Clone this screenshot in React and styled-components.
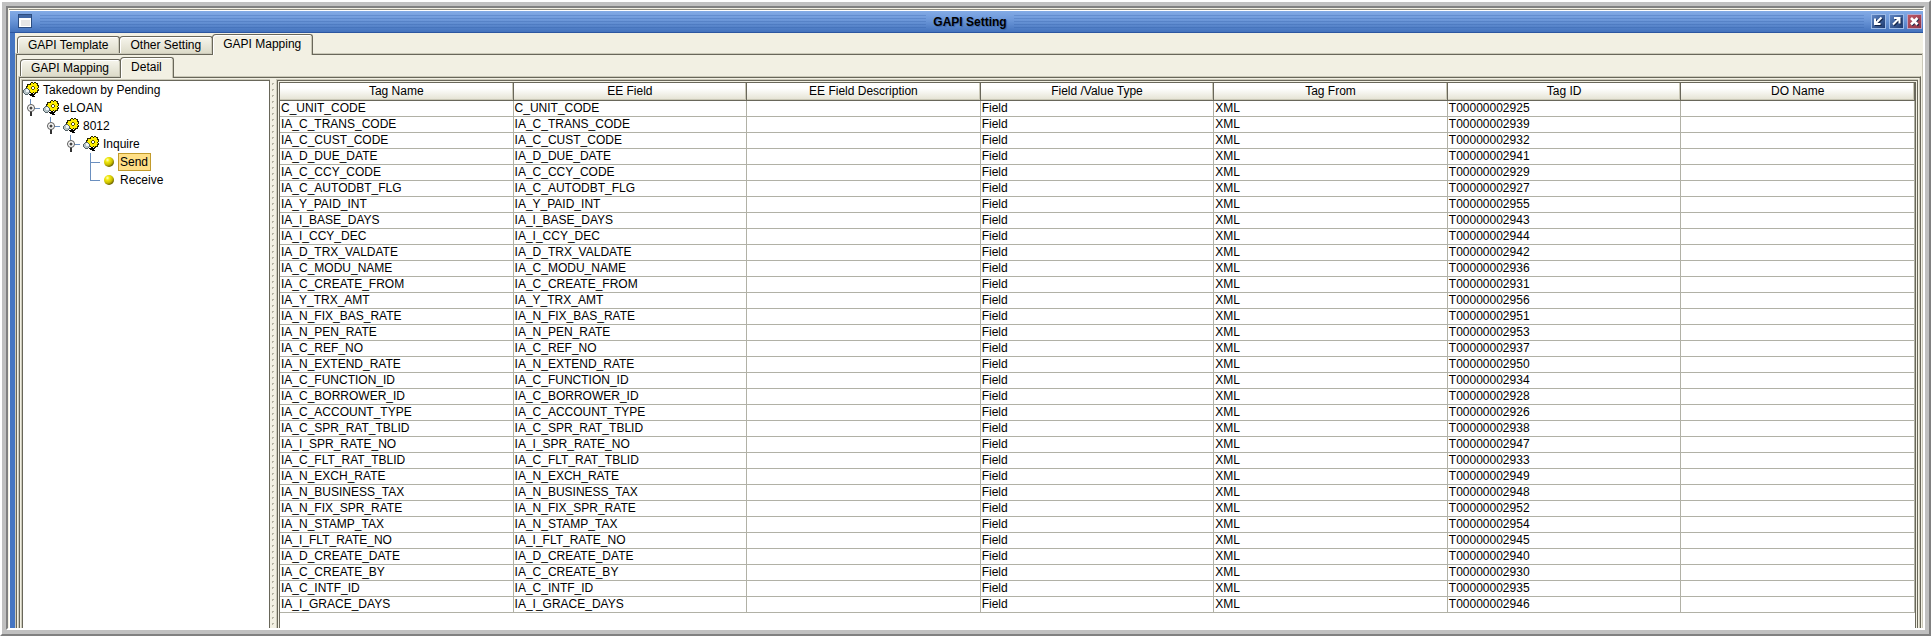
import React, { useState } from "react";
import styled, { createGlobalStyle, css } from "styled-components";

const c = {
  bg: "#f2f0e3",
  dark: "#69675a",
  mid: "#cbc9b9",
  grid: "#b1b1a6",
  blue: "#4676c2",
  branch: "#6a8fbf",
};

const GlobalStyle = createGlobalStyle`
  *, *::before, *::after { box-sizing: border-box; }
  html, body { margin: 0; padding: 0; }
  body, button, table {
    font-family: "Liberation Sans", Arial, sans-serif;
    font-size: 12px;
    color: #000;
  }
  button { margin: 0; padding: 0; border: 0; background: none; }
`;

const OuterFrame = styled.div`
  display: flex;
  min-height: 100vh;
  border: 2px solid;
  border-color: #fff #808080 #808080 #fff;
`;

const MiddleFrame = styled.div`
  display: flex;
  flex: 1;
  min-width: 0;
  border: 4px solid #c0c0c0;
`;

const InnerFrame = styled.div`
  display: flex;
  flex: 1;
  min-width: 0;
  padding: 1px 0 0 1px;
  border: 2px solid;
  border-color: #808080 #fff #fff #808080;
  background: ${c.bg};
`;

const Window = styled.main`
  display: flex;
  flex: 1;
  flex-direction: column;
  min-width: 0;
  padding: 1px 0 0 1px;
  border-top: 1px solid #8e8c80;
  background: #fff;
`;

const TitleBar = styled.header`
  display: flex;
  align-items: center;
  height: 22px;
  padding: 0 1px 0 8px;
  border-bottom: 1px solid #2c56a0;
  background: linear-gradient(#83abe6, #6e99da 40%, #4473bd);
`;

const TitleSide = styled.div`
  display: flex;
  flex: 1 1 0;
  align-items: center;
  gap: 7px;
`;

const TitleGrip = styled.span`
  flex: 1;
  height: 14px;
  background: repeating-linear-gradient(
    rgba(30, 75, 150, 0.22) 0 1px,
    transparent 1px 3px
  );
`;

const Title = styled.h1`
  margin: 0;
  padding: 0 7px;
  font-size: 12px;
  line-height: 20px;
  text-shadow: 1px 1px 1px #3c66a8;
`;

const WindowIcon = styled.svg`
  width: 15px;
  height: 15px;
`;

const WindowButtons = styled.div`
  display: flex;
  gap: 3px;
`;

const WindowButton = styled.button`
  width: 15px;
  height: 15px;
  border: 1px solid ${(p) => (p.$danger ? "#b3a6cc" : "#9dbbe8")};
  background: ${(p) =>
    p.$danger
      ? "linear-gradient(135deg, #c05a66, #8d3447)"
      : "linear-gradient(135deg, #5f86c4, #1d3a70)"};
  svg { display: block; }
`;

const WindowBody = styled.div`
  display: flex;
  flex: 1;
  flex-direction: column;
  min-width: 0;
  border-left: 5px solid ${c.blue};
  background: ${c.bg};
`;

const TabStrip = styled.div`
  display: flex;
  align-items: flex-end;
  height: ${(p) => p.$height}px;
  padding-left: 2px;
`;

const Tab = styled.button`
  height: 17px;
  padding: 1px 11px 0 10px;
  border: solid ${c.dark};
  border-width: 1px 1px 0;
  border-radius: 4px 3px 0 0;
  box-shadow: inset 1px 1px #fff, inset -1px 0 #c9c7b6;
  background: linear-gradient(#f6f5ec, #dddbc9);
  line-height: 15px;
  white-space: nowrap;
  & + & { margin-left: -1px; }
  ${(p) =>
    p.$active &&
    css`
      position: relative;
      z-index: 1;
      height: 21px;
      margin-bottom: -2px;
      padding-bottom: 2px;
      background: ${c.bg};
    `}
`;

const OuterPanel = styled.section`
  display: flex;
  flex: 1;
  flex-direction: column;
  min-width: 0;
  padding: 1px 1px 0 2px;
  border: solid ${c.mid};
  border-width: 1px 1px 0;
  box-shadow: inset 1px 1px ${c.dark};
`;

const InnerPanel = styled.section`
  display: flex;
  flex: 1;
  min-width: 0;
  padding: 2px 2px 0;
  border: solid ${c.mid};
  border-width: 1px 1px 0;
  border-right-color: ${c.dark};
  box-shadow: inset 1px 1px ${c.dark}, inset -1px 0 ${c.mid};
`;

const TreePane = styled.nav`
  flex: 0 0 249px;
  border: solid ${c.mid};
  border-width: 1px 0 0 1px;
`;

const Tree = styled.ul`
  height: 100%;
  margin: 0;
  padding: 0;
  border: solid ${c.dark};
  border-width: 1px 1px 0;
  background: #fff;
  list-style: none;
`;

const TreeRow = styled.li`
  display: flex;
  align-items: center;
  height: 18px;
  padding-left: ${(p) => p.$indent}px;
`;

const TreeToggle = styled.button`
  width: 20px;
  height: 18px;
  svg { display: block; }
`;

const TreeBranch = styled.svg`
  width: 20px;
  height: 18px;
`;

const TreeLabel = styled.button`
  height: 18px;
  margin-left: 2px;
  padding: 0 1px;
  border: 1px solid ${(p) => (p.$selected ? "#c29b2c" : "transparent")};
  background: ${(p) => (p.$selected ? "#ffdf86" : "none")};
  line-height: 16px;
  white-space: nowrap;
  ${(p) => p.$selected && "padding-right: 2px;"}
`;

const Splitter = styled.div`
  flex: 0 0 6px;
  padding: 4px 2px 0;
  &::before {
    content: "";
    display: block;
    height: 100%;
    background:
      repeating-linear-gradient(#b5b3a3 0 1px, transparent 1px 6px) 0 0 / 2px 100% no-repeat,
      repeating-linear-gradient(#b5b3a3 0 2px, transparent 2px 6px) 0 0 / 1px 100% no-repeat;
  }
`;

const TablePane = styled.div`
  flex: 1;
  min-width: 0;
  border: solid ${c.mid};
  border-width: 1px 0 0 1px;
`;

const TableBorder = styled.div`
  height: 100%;
  padding: 1px 1px 0;
  border: solid ${c.dark};
  border-width: 1px 1px 0;
`;

const TableView = styled.div`
  height: 100%;
  border: solid ${c.dark};
  border-width: 1px 1px 0;
  background: #fff;
`;

const Table = styled.table`
  width: 100%;
  table-layout: fixed;
  border-collapse: separate;
  border-spacing: 0;
`;

const HeadCell = styled.th`
  height: 18px;
  padding: 0;
  border: solid ${c.dark};
  border-width: 0 1px 1px 0;
  box-shadow: inset -1px -1px #c9c7b6;
  background: linear-gradient(#fff 30%, #e4e2d2);
  font-weight: normal;
  line-height: 17px;
`;

const Cell = styled.td`
  height: 16px;
  padding: 0 0 0 1px;
  border: solid ${c.grid};
  border-width: 0 1px 1px 0;
  line-height: 15px;
  white-space: nowrap;
`;

const GearIcon = () => (
  <svg width="16" height="16" viewBox="0 0 16 16" shapeRendering="crispEdges" aria-hidden="true">
    <path
      d="M8 0h2v1h1V0h2v1h2v2h1v3h-1v1h1v2h-1v2h-2v1h-2v-1h-1v1H8v-1H5V9H4V7H3V4h1V2h3V1h1z"
      fill="#2a2700"
    />
    <path
      d="M8 1h2v1h1V1h2v1h1v2h1v2h-1v1h1v1h-1v2h-2v1h-1v-1h-1v1H8v-1H6V8H5V6H4V5h1V3h3z"
      fill="#ffee00"
    />
    <path d="M9 4h2v1h1v2h-1v1H9V7H8V5h1z" fill="#5c5400" />
    <path d="M9 5h2v2H9z" fill="#fff" />
    <path d="M6 12h2v-1h2v1h2v1h-1v1h1v1H9v-1H7v-1H6z" fill="#000" />
    <path d="M2 6h3v1h1v1h1v3H6v1H5v1H2v-1H1v-1H0V8h1V7h1z" fill="#55646a" />
    <path d="M2 7h3v1h1v3H5v1H2v-1H1V8h1z" fill="#b4c2c6" />
    <path d="M3 7h2v1h1v2H3z" fill="#f0f5f6" />
  </svg>
);

const BallIcon = () => (
  <svg width="13" height="18" viewBox="0 0 13 18" aria-hidden="true">
    <defs>
      <radialGradient id="ball" cx="35%" cy="30%" r="70%">
        <stop offset="0" stopColor="#ffffc8" />
        <stop offset="0.3" stopColor="#f2ea10" />
        <stop offset="0.7" stopColor="#c9bd00" />
        <stop offset="1" stopColor="#6c6500" />
      </radialGradient>
    </defs>
    <circle cx="6" cy="9" r="5" fill="url(#ball)" />
  </svg>
);

const HandleIcon = () => (
  <svg width="20" height="18" viewBox="0 0 20 18" aria-hidden="true">
    <path d="M7 0h1v5H7zM12 9h5v1h-5z" fill={c.branch} />
    <path d="M7 12h2v5H7z" fill="#333" />
    <circle cx="8" cy="9" r="3.5" fill="#fff" stroke="#555" />
    <circle cx="8" cy="9" r="1.5" fill="#444" />
  </svg>
);

const Branch = ({ last }) => (
  <TreeBranch viewBox="0 0 20 18" aria-hidden="true">
    <path d={`M7 0h1v${last ? 10 : 18}H7zM7 9h10v1H7z`} fill={c.branch} />
  </TreeBranch>
);

const Glyph = ({ d, ...rest }) => (
  <svg width="13" height="13" viewBox="0 0 13 13" aria-hidden="true">
    <path d={d} transform="translate(1 1)" stroke="#14264a" strokeWidth="2" fill="none" />
    <path d={d} stroke="#fff" strokeWidth="2" fill="none" {...rest} />
  </svg>
);

const nodes = [
  { label: "Takedown by Pending", depth: 0 },
  { label: "eLOAN", depth: 1 },
  { label: "8012", depth: 2 },
  { label: "Inquire", depth: 3 },
  { label: "Send", depth: 4, leaf: true },
  { label: "Receive", depth: 4, leaf: true, last: true },
];

const columns = [
  "Tag Name",
  "EE Field",
  "EE Field Description",
  "Field /Value Type",
  "Tag From",
  "Tag ID",
  "DO Name",
];

const tags = [
  ["C_UNIT_CODE", "2925"],
  ["IA_C_TRANS_CODE", "2939"],
  ["IA_C_CUST_CODE", "2932"],
  ["IA_D_DUE_DATE", "2941"],
  ["IA_C_CCY_CODE", "2929"],
  ["IA_C_AUTODBT_FLG", "2927"],
  ["IA_Y_PAID_INT", "2955"],
  ["IA_I_BASE_DAYS", "2943"],
  ["IA_I_CCY_DEC", "2944"],
  ["IA_D_TRX_VALDATE", "2942"],
  ["IA_C_MODU_NAME", "2936"],
  ["IA_C_CREATE_FROM", "2931"],
  ["IA_Y_TRX_AMT", "2956"],
  ["IA_N_FIX_BAS_RATE", "2951"],
  ["IA_N_PEN_RATE", "2953"],
  ["IA_C_REF_NO", "2937"],
  ["IA_N_EXTEND_RATE", "2950"],
  ["IA_C_FUNCTION_ID", "2934"],
  ["IA_C_BORROWER_ID", "2928"],
  ["IA_C_ACCOUNT_TYPE", "2926"],
  ["IA_C_SPR_RAT_TBLID", "2938"],
  ["IA_I_SPR_RATE_NO", "2947"],
  ["IA_C_FLT_RAT_TBLID", "2933"],
  ["IA_N_EXCH_RATE", "2949"],
  ["IA_N_BUSINESS_TAX", "2948"],
  ["IA_N_FIX_SPR_RATE", "2952"],
  ["IA_N_STAMP_TAX", "2954"],
  ["IA_I_FLT_RATE_NO", "2945"],
  ["IA_D_CREATE_DATE", "2940"],
  ["IA_C_CREATE_BY", "2930"],
  ["IA_C_INTF_ID", "2935"],
  ["IA_I_GRACE_DAYS", "2946"],
];

function Tabs({ items, initial, height }) {
  const [active, setActive] = useState(initial);
  return (
    <TabStrip role="tablist" $height={height}>
      {items.map((name) => (
        <Tab
          key={name}
          type="button"
          role="tab"
          aria-selected={name === active}
          $active={name === active}
          onClick={() => setActive(name)}
        >
          {name}
        </Tab>
      ))}
    </TabStrip>
  );
}

function NavigationTree() {
  const [selected, setSelected] = useState("Send");
  return (
    <TreePane aria-label="Mappings">
      <Tree>
        {nodes.map(({ label, depth, leaf, last }) => (
          <TreeRow key={label} $indent={Math.max(0, depth - 1) * 20}>
            {leaf && <Branch last={last} />}
            {!leaf && depth > 0 && (
              <TreeToggle type="button" aria-label={`Toggle ${label}`}>
                <HandleIcon />
              </TreeToggle>
            )}
            {leaf ? <BallIcon /> : <GearIcon />}
            <TreeLabel
              type="button"
              $selected={label === selected}
              onClick={() => setSelected(label)}
            >
              {label}
            </TreeLabel>
          </TreeRow>
        ))}
      </Tree>
    </TreePane>
  );
}

function TagTable() {
  return (
    <Table>
      <thead>
        <tr>
          {columns.map((name) => (
            <HeadCell key={name} scope="col">{name}</HeadCell>
          ))}
        </tr>
      </thead>
      <tbody>
        {tags.map(([name, id]) => (
          <tr key={name}>
            <Cell>{name}</Cell>
            <Cell>{name}</Cell>
            <Cell />
            <Cell>Field</Cell>
            <Cell>XML</Cell>
            <Cell>{`T0000000${id}`}</Cell>
            <Cell />
          </tr>
        ))}
      </tbody>
    </Table>
  );
}

export default function App() {
  return (
    <OuterFrame>
      <GlobalStyle />
      <MiddleFrame>
        <InnerFrame>
          <Window>
            <TitleBar>
              <TitleSide>
                <WindowIcon viewBox="0 0 15 15" aria-hidden="true">
                  <path d="M0 0h14v14H0z" fill="#2d4d80" />
                  <path d="M1 1h12v3H1z" fill="#3f66a4" />
                  <path d="M1 4h12v9H1z" fill="#fff" />
                  <path d="M3 6h9v6H3z" fill="#e6e6e6" />
                </WindowIcon>
                <TitleGrip />
              </TitleSide>
              <Title>GAPI Setting</Title>
              <TitleSide>
                <TitleGrip />
                <WindowButtons>
                  <WindowButton type="button" aria-label="Minimize">
                    <Glyph d="M9.5 2.5L4 8M3 3.5V9H8.5" />
                  </WindowButton>
                  <WindowButton type="button" aria-label="Maximize">
                    <Glyph d="M3 9.5L8.5 4M4 3H9.5V8.5" />
                  </WindowButton>
                  <WindowButton type="button" aria-label="Close" $danger>
                    <Glyph d="M3 3L9.5 9.5M9.5 3L3 9.5" strokeWidth="2.6" />
                  </WindowButton>
                </WindowButtons>
              </TitleSide>
            </TitleBar>
            <WindowBody>
              <Tabs
                items={["GAPI Template", "Other Setting", "GAPI Mapping"]}
                initial="GAPI Mapping"
                height={20}
              />
              <OuterPanel>
                <Tabs items={["GAPI Mapping", "Detail"]} initial="Detail" height={21} />
                <InnerPanel>
                  <NavigationTree />
                  <Splitter />
                  <TablePane>
                    <TableBorder>
                      <TableView>
                        <TagTable />
                      </TableView>
                    </TableBorder>
                  </TablePane>
                </InnerPanel>
              </OuterPanel>
            </WindowBody>
          </Window>
        </InnerFrame>
      </MiddleFrame>
    </OuterFrame>
  );
}
